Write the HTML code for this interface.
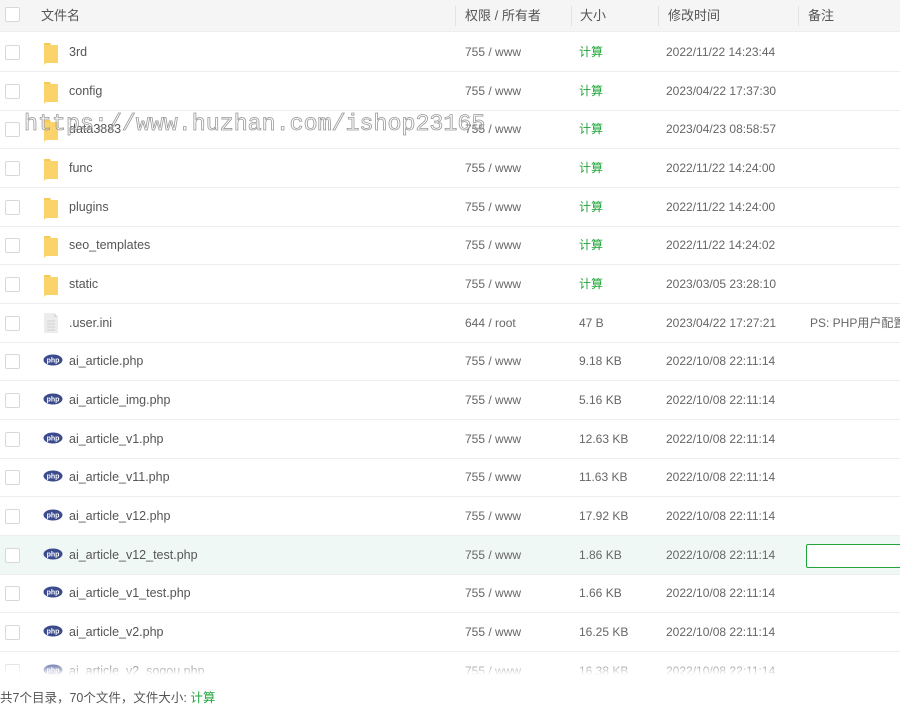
<!DOCTYPE html>
<html><head><meta charset="utf-8"><style>
*{margin:0;padding:0;box-sizing:border-box}
body{width:900px;height:711px;overflow:hidden;background:#fff;font-family:"Liberation Sans","Noto Sans CJK SC",sans-serif;font-size:12px;color:#666;position:relative}
.hd{position:absolute;left:0;top:0;width:900px;height:32px;background:#f5f5f5;border-bottom:1px solid #eee}
.hd span{position:absolute;top:7px;font-size:13px;line-height:17px;color:#555}
.sep{position:absolute;top:6px;width:1px;height:20px;background:#e2e2e2}
.cb{position:absolute;left:5px;width:15px;height:15px;border:1px solid #d8d8d8;border-radius:2px;background:#fff}
.row{position:absolute;left:0;width:900px;height:39px;border-bottom:1px solid #eee}
.row .cb{top:12px}
.row span{position:absolute;top:11px;line-height:16px;white-space:nowrap}
.nm{left:69px;color:#555;font-size:12.5px}
.pm{left:465px}.sz{left:579px}.tm{left:666px}.rk{left:810px}
.g{color:#20a53a}
.ic{position:absolute;left:43px;top:8px}
.wm{position:absolute;left:24px;top:110px;font-family:"Liberation Mono",monospace;font-size:23.3px;line-height:28px;color:rgba(255,255,255,0.2);-webkit-text-stroke:0.8px #999;white-space:nowrap}
.ft{position:absolute;left:0;top:690px;font-size:12.5px;line-height:17px;color:#555}
.fade{position:absolute;left:0;top:660px;width:900px;height:15px;background:linear-gradient(rgba(255,255,255,0),#fff)}
</style></head><body>
<div class="hd"><div class="cb" style="top:7px"></div>
<span style="left:41px">文件名</span>
<div class="sep" style="left:455px"></div><span style="left:465px">权限 / 所有者</span>
<div class="sep" style="left:571px"></div><span style="left:580px">大小</span>
<div class="sep" style="left:658px"></div><span style="left:668px">修改时间</span>
<div class="sep" style="left:798px"></div><span style="left:808px">备注</span>
</div>
<div id="rows"></div>
<div class="fade"></div>
<div style="position:absolute;left:0;top:675px;width:900px;height:36px;background:#fff"></div>
<div class="ft">共7个目录，70个文件，文件大小: <span class="g">计算</span></div>
<div class="wm">https://www.huzhan.com/ishop23165</div>
<script>
var folder='<svg class="ic" width="16" height="24" viewBox="0 0 16 24"><path d="M1 2h6l1 2h7v18H1z" fill="#f7c955"/><path d="M1 4h14v18H3l-2 2z" fill="#fad46a"/></svg>';
var file='<svg class="ic" width="16" height="22" viewBox="0 0 16 22"><path d="M1 1h10l4 4v16H1z" fill="#ececec"/><path d="M11 1v4h4" fill="#d8d8d8"/><path d="M4 9h8M4 12h8M4 15h8M4 18h8" stroke="#d0d0d0"/></svg>';
var php='<svg class="ic" style="top:12px" width="20" height="12" viewBox="0 0 20 12"><ellipse cx="10" cy="6" rx="9.5" ry="5.5" fill="#3c4a8e"/><text x="10" y="8.5" font-size="7" font-family="Liberation Sans" font-weight="bold" fill="#fff" text-anchor="middle">php</text></svg>';
var d=[["f","3rd","755 / www","c","2022/11/22 14:23:44"],["f","config","755 / www","c","2023/04/22 17:37:30"],["f","data3883","755 / www","c","2023/04/23 08:58:57"],["f","func","755 / www","c","2022/11/22 14:24:00"],["f","plugins","755 / www","c","2022/11/22 14:24:00"],["f","seo_templates","755 / www","c","2022/11/22 14:24:02"],["f","static","755 / www","c","2023/03/05 23:28:10"],["t",".user.ini","644 / root","47 B","2023/04/22 17:27:21"],["p","ai_article.php","755 / www","9.18 KB","2022/10/08 22:11:14"],["p","ai_article_img.php","755 / www","5.16 KB","2022/10/08 22:11:14"],["p","ai_article_v1.php","755 / www","12.63 KB","2022/10/08 22:11:14"],["p","ai_article_v11.php","755 / www","11.63 KB","2022/10/08 22:11:14"],["p","ai_article_v12.php","755 / www","17.92 KB","2022/10/08 22:11:14"],["p","ai_article_v12_test.php","755 / www","1.86 KB","2022/10/08 22:11:14"],["p","ai_article_v1_test.php","755 / www","1.66 KB","2022/10/08 22:11:14"],["p","ai_article_v2.php","755 / www","16.25 KB","2022/10/08 22:11:14"],["p","ai_article_v2_sogou.php","755 / www","16.38 KB","2022/10/08 22:11:14"]];
var h='';
d.forEach(function(r,i){var top=33+i*38.67;var bg=i==13?'background:#f0f8f6;':'';
h+='<div class="row" style="top:'+top+'px;'+bg+'"><div class="cb"></div>'+(r[0]=='f'?folder:r[0]=='t'?file:php)+'<span class="nm">'+r[1]+'</span><span class="pm">'+r[2]+'</span><span class="sz'+(r[3]=='c'?' g':'')+'">'+(r[3]=='c'?'计算':r[3])+'</span><span class="tm">'+r[4]+'</span>'+(i==7?'<span class="rk">PS: PHP用户配置文件</span>':'')+(i==13?'<div style="position:absolute;left:806px;top:8px;width:100px;height:24px;border:1px solid #20a53a;border-radius:2px;background:#fff"></div>':'')+'</div>';});
document.getElementById('rows').innerHTML=h;
</script>
</body></html>
